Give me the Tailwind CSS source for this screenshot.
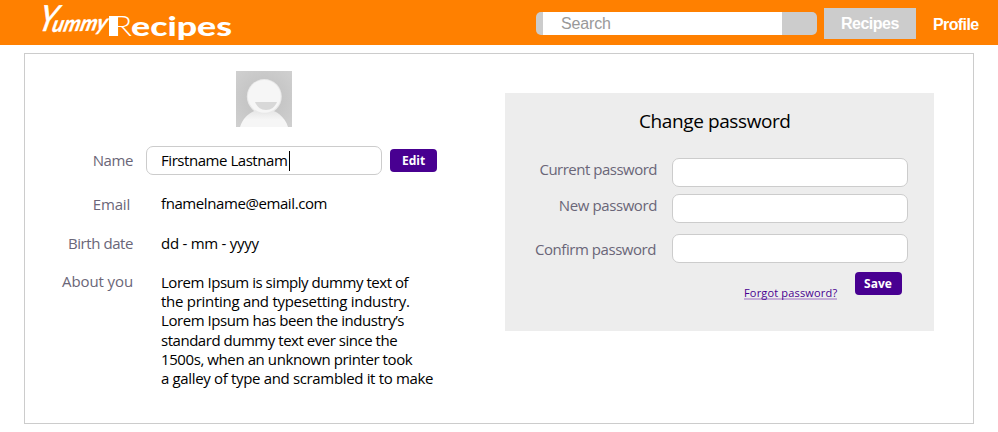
<!DOCTYPE html>
<html lang="en">
<head>
<meta charset="utf-8">
<title>Yummy Recipes</title>
<script src="https://cdn.jsdelivr.net/npm/@tailwindcss/browser@4"></script>
</head>
<body class="h-[432px] overflow-hidden bg-white font-['Open_Sans',sans-serif] text-[15px] leading-5 text-black">
<header class="flex h-[45px] items-start bg-[#ff8000] pl-9 font-['Liberation_Sans',sans-serif] text-base text-white">
  <svg class="h-[45px] w-[200px] overflow-visible" viewBox="36 0 200 45" fill="#fff" role="img" aria-label="Yummy Recipes">
    <g font-family="Lato, sans-serif" font-style="italic" font-weight="700" stroke="#fff">
      <text transform="translate(36.5 31) skewX(-14)" font-size="36" font-weight="400" stroke-width=".6" textLength="18" lengthAdjust="spacingAndGlyphs">Y</text>
      <text transform="translate(51 32) rotate(-2) skewX(-16)" font-size="22" stroke-width=".3" textLength="55" lengthAdjust="spacingAndGlyphs">ummy</text>
    </g>
    <g font-family="Lato, sans-serif">
      <rect x="109" y="16" width="9" height="20"/>
      <text x="113" y="36" font-weight="300" font-size="28" textLength="19" lengthAdjust="spacingAndGlyphs">R</text>
      <text x="131" y="36" font-weight="900" font-size="27" textLength="101" lengthAdjust="spacingAndGlyphs">ecipes</text>
    </g>
  </svg>
  <div class="mt-3 ml-[300px] flex h-[23px] w-[281px] overflow-hidden rounded-[5px] bg-[#ccc] pl-[7px]">
    <div class="w-[239px] bg-white pl-[18px] leading-[23px] text-[#999]"><span class="tracking-[-0.15px]">Search</span></div>
  </div>
  <nav class="flex">
    <a class="mt-2 ml-[7px] h-[31px] w-[92px] bg-[#ccc] pl-[17px] font-bold tracking-[-0.5px] leading-[31px]">Recipes</a>
    <a class="mt-[9px] ml-[17px] font-bold tracking-[-0.6px] leading-[31px]">Profile</a>
  </nav>
</header>

<main class="mx-6 mt-2 flex h-[371px] w-[950px] border border-[#ccc]">
  <section class="w-[480px] pt-[17px]">
    <svg class="ml-[211px] h-14 w-14" viewBox="0 0 56 56">
      <defs>
        <radialGradient id="bg" cx=".5" cy=".5" r=".7"><stop offset="0" stop-color="#bdbdbd"/><stop offset="1" stop-color="#d0d0d0"/></radialGradient>
        <linearGradient id="body" x2="0" y2="1"><stop offset="0" stop-color="#e3e3e3"/><stop offset=".6" stop-color="#f6f6f6"/></linearGradient>
      </defs>
      <path fill="url(#bg)" d="M0 0h56v56H0z"/>
      <path fill="url(#body)" d="M4 56C7 46 16 38 28 38s21 8 24 18z"/>
      <circle cx="28.3" cy="25.6" r="17.5" fill="#e9e9e9"/>
      <circle cx="28.3" cy="25.3" r="16.4" fill="#f6f6f6"/>
      <path fill="#d8d8d8" d="M19 31h22c-2 5-6 8-11 8s-9-3-11-8z"/>
    </svg>
    <div class="mt-[19px] flex h-[29px] items-start">
      <span class="mt-1 w-[108px] text-right tracking-[-0.4px] text-[#6a6678]">Name</span>
      <div class="ml-[13px] flex h-[29px] w-[236px] rounded-[7px] border border-[#ccc] bg-white pt-1 pl-[14px]">
        <span class="-mt-px tracking-[-0.45px]">Firstname Lastnam</span><span class="ml-[2px] h-5 w-px bg-black"></span>
      </div>
      <button class="mt-[3px] ml-2 h-[23px] w-[47px] rounded-[4px] bg-[#480091] text-xs font-bold leading-[23px] text-white">Edit</button>
    </div>
    <div class="mt-[18px] flex h-10">
      <span class="mt-px w-[105px] text-right tracking-[-0.2px] text-[#6a6678]">Email</span>
      <span class="ml-[31px] tracking-[-0.41px]">fnamelname@email.com</span>
    </div>
    <div class="flex h-[38px]">
      <span class="w-[108px] text-right tracking-[-0.43px] text-[#6a6678]">Birth date</span>
      <span class="ml-[28px] tracking-[-0.26px]">dd - mm - yyyy</span>
    </div>
    <div class="flex">
      <span class="w-[108px] text-right tracking-[-0.1px] text-[#6a6678]">About you</span>
      <p class="mt-[2px] ml-[28px] leading-[19.2px] whitespace-nowrap">
        <span class="block tracking-[-0.46px]">Lorem Ipsum is simply dummy text of</span>
        <span class="block tracking-[-0.28px]">the printing and typesetting industry.</span>
        <span class="block tracking-[-0.44px]">Lorem Ipsum has been the industry’s</span>
        <span class="block tracking-[-0.47px]">standard dummy text ever since the</span>
        <span class="block tracking-[-0.41px]">1500s, when an unknown printer took</span>
        <span class="block tracking-[-0.34px]">a galley of type and scrambled it to make</span>
      </p>
    </div>
  </section>

  <section class="mt-[39px] h-[238px] w-[429px] bg-[#ededed] pt-[14px]">
    <h2 class="pl-[134px] text-[19px] leading-7 tracking-[-0.4px]">Change password</h2>
    <div class="mt-[23px] flex h-[29px]">
      <label class="mt-[1px] w-[152px] text-right tracking-[-0.5px] text-[#6a6678]">Current password</label>
      <div class="ml-[15px] w-[236px] rounded-[7px] border border-[#ccc] bg-white"></div>
    </div>
    <div class="mt-[7px] flex h-[29px]">
      <label class="mt-[1px] w-[152px] text-right tracking-[-0.4px] text-[#6a6678]">New password</label>
      <div class="ml-[15px] w-[236px] rounded-[7px] border border-[#ccc] bg-white"></div>
    </div>
    <div class="mt-[11px] flex h-[29px]">
      <label class="mt-[5px] w-[151px] text-right tracking-[-0.45px] text-[#6a6678]">Confirm password</label>
      <div class="ml-[16px] w-[236px] rounded-[7px] border border-[#ccc] bg-white"></div>
    </div>
    <div class="mt-[9px] flex items-start pl-[239px]">
      <a class="mt-[13px] h-[15px] w-[93px] border-b-2 border-[#c5aed8] text-[11px] leading-[15px] tracking-[0.17px] whitespace-nowrap text-[#480091]">Forgot password?</a>
      <button class="ml-[18px] h-[23px] w-[47px] rounded-[4px] bg-[#480091] pr-px text-xs font-bold leading-[23px] text-white">Save</button>
    </div>
  </section>
</main>
</body>
</html>
